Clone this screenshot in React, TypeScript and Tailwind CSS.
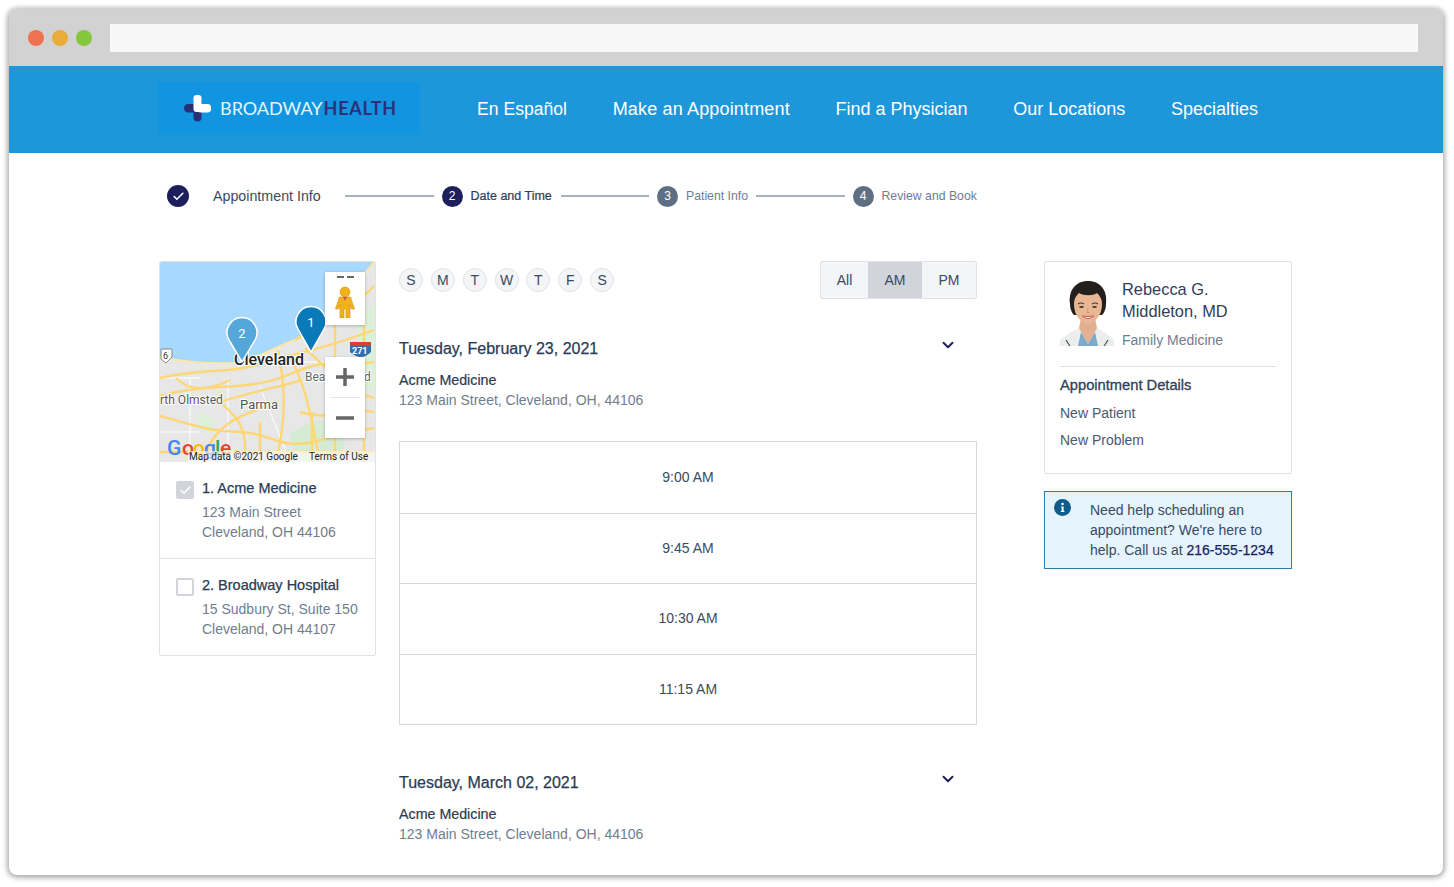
import { Check, ChevronDown } from "lucide-react";

const NAV = [
  { label: "En Español", cls: "text-[17.6px]" },
  { label: "Make an Appointment", cls: "tracking-[0.16px]" },
  { label: "Find a Physician", cls: "" },
  { label: "Our Locations", cls: "" },
  { label: "Specialties", cls: "" },
];
const DAYS = ["S", "M", "T", "W", "T", "F", "S"];
const TIMES = ["9:00 AM", "9:45 AM", "10:30 AM", "11:15 AM"];

function Logo() {
  return (
    <div className="mb-[3px] flex h-[53px] w-[262px] items-center bg-[#1195e0] pl-[26px]">
      <svg width="27" height="27" viewBox="0 0 27 27" className="shrink-0">
        <rect x="0" y="9" width="20" height="8.5" rx="4.2" fill="#2a2e75" />
        <rect x="9.5" y="13" width="8" height="13.5" rx="4" fill="#2a2e75" />
        <rect x="9.5" y="0" width="8" height="17" rx="3" fill="#fff" />
        <rect x="13" y="9" width="14" height="8.5" rx="3.5" fill="#fff" />
      </svg>
      <span className="ml-[9px] text-[18px] leading-none text-[#e6f5fd] [font-family:'Lato',sans-serif]">
        BROADWAY<span className="ml-[1px] font-bold tracking-[0.7px] text-[#2d2f7a]">HEALTH</span>
      </span>
    </div>
  );
}

function StepLine() {
  return <div className="h-[2px] w-[88.5px] bg-[#a9b1bf]" />;
}

function StepDot({ n, active }: { n: number; active?: boolean }) {
  return (
    <span
      className={`flex h-[21px] w-[21px] items-center justify-center rounded-full text-[12px] text-white ${
        active ? "bg-[#1c1f5c]" : "bg-[#5f6f83]"
      }`}
    >
      {n}
    </span>
  );
}

function Stepper() {
  return (
    <div className="flex h-[85px] items-center pl-[158px] pt-[1px]">
      <span className="flex h-[22px] w-[22px] items-center justify-center rounded-full bg-[#1c1f5c]">
        <Check className="h-[13px] w-[13px] text-white" strokeWidth={3} />
      </span>
      <span className="ml-[24px] mr-[24px] mt-[1px] w-[108px] whitespace-nowrap text-[14.25px] text-[#3a4a5f]">Appointment Info</span>
      <StepLine />
      <span className="mx-[8px]"><StepDot n={2} active /></span>
      <span className="mr-[8px] mt-[1px] w-[82px] whitespace-nowrap text-[12.5px] text-[#2c3c55] [-webkit-text-stroke:0.2px_#2c3c55]">Date and Time</span>
      <StepLine />
      <span className="mx-[8px]"><StepDot n={3} /></span>
      <span className="mr-[8px] mt-[1px] w-[62px] whitespace-nowrap text-[12.25px] text-[#6f7d8f]">Patient Info</span>
      <StepLine />
      <span className="mx-[8px]"><StepDot n={4} /></span>
      <span className="mt-[1px] whitespace-nowrap text-[12.25px] text-[#6f7d8f]">Review and Book</span>
    </div>
  );
}

function MapArt() {
  const roads = [
    "M0 116 C40 106 70 112 100 102 S150 92 214 68",
    "M0 134 C50 120 90 130 130 112 S180 106 214 100",
    "M0 154 C30 162 50 170 80 170 S120 190 160 178 S200 170 214 166",
    "M0 190 H214",
    "M118 88 C124 120 128 150 116 200",
    "M128 92 C145 120 150 150 158 190",
    "M84 200 C90 160 70 150 60 140 C90 130 120 125 142 118",
    "M44 200 C50 160 90 150 118 140",
    "M145 86 C170 110 190 130 214 136",
    "M175 60 V200",
    "M204 30 V200",
    "M140 150 C170 160 185 145 214 150",
    "M135 78 C160 65 190 50 214 24",
    "M16 116 C30 130 50 128 70 118",
    "M100 200 V160 M152 200 V150",
  ];
  return (
    <svg width="215" height="200" viewBox="0 0 215 200" className="block">
      <rect width="215" height="200" fill="#e7e7e7" />
      <path d="M0 95 C25 100 55 102 75 101 C100 96 115 85 135 78 C155 66 175 50 214 0 H0 Z" fill="#a8d8fd" />
      <path d="M0 95 C25 100 55 102 75 101 C100 96 115 85 135 78 C155 66 175 50 214 0" fill="none" stroke="#fde6a6" strokeWidth="2" />
      <path d="M130 172 C150 155 172 155 188 168 L180 200 H135 Z" fill="#d5ebd3" />
      <path d="M197 60 L215 40 V130 L202 125 Z" fill="#dcefd8" />
      <path d="M40 150 L56 158 L48 172 L36 164 Z" fill="#dcefd8" />
      <path d="M0 116 H40 M30 116 V200 M68 116 V200 M100 125 L130 200 M0 170 H40 M140 100 H214" fill="none" stroke="#fff" strokeWidth="1" />
      {roads.map((d) => (
        <path key={d} d={d} fill="none" stroke="#fdd775" strokeWidth="2.4" />
      ))}
      <path d="M1 87 H12 L12 95 L6 101 L1 97 Z" fill="#fff" stroke="#888" strokeWidth="1" />
      <text x="3" y="97" fontSize="9" fill="#333" fontFamily="Roboto, sans-serif">6</text>
      <path d="M190 83 H211 V90 Q201 100 190 90 Z" fill="#2f6fb5" />
      <rect x="190" y="80" width="21" height="3.5" fill="#d9412f" />
      <text x="192" y="92" fontSize="9" fontWeight="700" fill="#fff" fontFamily="Roboto, sans-serif">271</text>
      <g fontFamily="Roboto, sans-serif" stroke="#fff" strokeWidth="2" paintOrder="stroke">
        <text x="74" y="103" fontSize="16" fontWeight="500" fill="#222">Cleveland</text>
        <text x="145" y="119" fontSize="12" fill="#666">Bea</text>
        <text x="204" y="119" fontSize="12" fill="#666">d</text>
        <text x="0" y="142" fontSize="12" fill="#555">rth Olmsted</text>
        <text x="80" y="147" fontSize="13" fill="#555">Parma</text>
      </g>
      <g fontFamily="Roboto, sans-serif" fontWeight="500" fontSize="21">
        <text x="7" y="193" fill="#4285f4">G</text>
        <text x="22" y="193" fill="#ea4335">o</text>
        <text x="33" y="193" fill="#fbbc05">o</text>
        <text x="44" y="193" fill="#4285f4">g</text>
        <text x="55" y="193" fill="#34a853">l</text>
        <text x="60" y="193" fill="#ea4335">e</text>
      </g>
      <rect x="28" y="189" width="187" height="11" fill="#fff" fillOpacity="0.6" />
      <g fontFamily="Roboto, sans-serif" fontSize="10" fill="#222">
        <text x="29" y="198">Map data ©2021 Google</text>
        <text x="149" y="198">Terms of Use</text>
      </g>
      {/* pins */}
      <path d="M82 100 L69 78 A15 15 0 1 1 95 78 Z" fill="#53a8d9" stroke="#fff" strokeWidth="1.5" />
      <text x="82" y="76" textAnchor="middle" fontSize="13" fill="#fff" fontFamily="Roboto, sans-serif">2</text>
      <path d="M151 90 L138 67 A15 15 0 1 1 164 67 Z" fill="#0a79b8" stroke="#fff" strokeWidth="1.5" />
      <text x="151" y="65" textAnchor="middle" fontSize="13" fill="#fff" fontFamily="Roboto, sans-serif">1</text>
    </svg>
  );
}

function Pegman() {
  return (
    <svg width="20" height="32" viewBox="0 0 20 32">
      <circle cx="10" cy="6" r="5" fill="#f2b21e" stroke="#d18f10" strokeWidth="0.6" />
      <path d="M4.5 11 H15.5 L19.5 23 H16.5 L15 19 V32 H11 V23 H9 V32 H5 V19 L3.5 23 H0.5 Z" fill="#f2b21e" stroke="#d18f10" strokeWidth="0.6" />
      <path d="M8 11 L10 15 L12 11 Z" fill="#d9534f" />
    </svg>
  );
}

function LocationsCard() {
  return (
    <div className="w-[217px] shrink-0 rounded-[2px] border border-[#dfe2e7] bg-white">
      <div className="relative h-[200px] overflow-hidden rounded-t-[2px]">
        <MapArt />
        <div className="absolute left-[165px] top-[10px] flex h-[53px] w-[40px] flex-col items-center bg-white shadow-[0_1px_3px_rgba(0,0,0,0.25)]">
          <div className="mt-[2px] flex h-[10px] gap-[3px] pt-[1px]">
            <span className="mt-[1px] h-[2px] w-[7px] bg-[#666]" />
            <span className="mt-[1px] h-[2px] w-[7px] bg-[#666]" />
          </div>
          <div className="mt-[2px]"><Pegman /></div>
        </div>
        <div className="absolute left-[165px] top-[95px] flex h-[81px] w-[40px] flex-col items-center bg-white shadow-[0_1px_3px_rgba(0,0,0,0.25)]">
          <svg width="20" height="40" viewBox="0 0 20 40"><path d="M1 20 H19 M10 11 V29" stroke="#666" strokeWidth="3.5" /></svg>
          <div className="h-px w-[30px] bg-[#e6e6e6]" />
          <svg width="20" height="40" viewBox="0 0 20 40"><path d="M1 20 H19" stroke="#666" strokeWidth="3.5" /></svg>
        </div>
      </div>
      <div className="flex h-[97px] border-b border-[#dfe2e7] pl-[16px] pt-[16px]">
        <span className="mr-[8px] mt-[3px] flex h-[18px] w-[18px] items-center justify-center rounded-[2px] bg-[#d1d5db]">
          <Check className="h-[13px] w-[13px] text-white" strokeWidth={3} />
        </span>
        <div>
          <div className="text-[14.5px] leading-[20px] text-[#2a3b55] [-webkit-text-stroke:0.25px_#2a3b55]">1. Acme Medicine</div>
          <div className="mt-[4px] text-[14px] leading-[20px] text-[#6f7d8f]">123 Main Street</div>
          <div className="text-[14px] leading-[20px] text-[#6f7d8f]">Cleveland, OH 44106</div>
        </div>
      </div>
      <div className="flex h-[96px] pl-[16px] pt-[16px]">
        <span className="mr-[8px] mt-[3px] h-[18px] w-[18px] rounded-[2px] border-2 border-[#d1d5db] bg-white" />
        <div>
          <div className="text-[14.5px] leading-[20px] text-[#2a3b55] [-webkit-text-stroke:0.25px_#2a3b55]">2. Broadway Hospital</div>
          <div className="mt-[4px] text-[14px] leading-[20px] text-[#6f7d8f]">15 Sudbury St, Suite 150</div>
          <div className="text-[14px] leading-[20px] text-[#6f7d8f]">Cleveland, OH 44107</div>
        </div>
      </div>
    </div>
  );
}

function DateHead({ date }: { date: string }) {
  return (
    <>
      <div className="flex items-start justify-between pr-[20px]">
        <div className="text-[16px] leading-[22px] text-[#2a3b55] [-webkit-text-stroke:0.25px_#2a3b55]">{date}</div>
        <ChevronDown className="-mt-[2px] h-[18px] w-[18px] text-[#1c1f5c]" strokeWidth={2.6} />
      </div>
      <div className="mt-[10px] text-[14.25px] leading-[20px] text-[#2a3b55] [-webkit-text-stroke:0.2px_#2a3b55]">Acme Medicine</div>
      <div className="text-[14px] leading-[20px] text-[#6f7d8f]">123 Main Street, Cleveland, OH, 44106</div>
    </>
  );
}

function Schedule() {
  return (
    <div className="ml-[23px] w-[578px] shrink-0">
      <div className="flex items-start justify-between">
        <div className="mt-[7px] flex gap-[7.85px]">
          {DAYS.map((d, i) => (
            <span
              key={i}
              className="flex h-[24px] w-[24px] items-center justify-center rounded-full border border-[#dfe2e7] bg-[#f4f5f7] text-[14px] text-[#3a4a5f]"
            >
              {d}
            </span>
          ))}
        </div>
        <div className="flex h-[38px] overflow-hidden rounded-[2px] border border-[#dfe2e7] bg-[#f4f5f7] text-[14px] text-[#3a4a5f]">
          <span className="flex w-[47px] items-center justify-center">All</span>
          <span className="flex w-[54px] items-center justify-center bg-[#d1d5db]">AM</span>
          <span className="flex w-[54px] items-center justify-center">PM</span>
        </div>
      </div>
      <div className="mt-[39px]">
        <DateHead date="Tuesday, February 23, 2021" />
      </div>
      <div className="mt-[31px] border border-[#d5d9df]">
        {TIMES.map((t, i) => (
          <div
            key={t}
            className={`flex h-[70.5px] items-center justify-center text-[14px] text-[#3a4a5f] ${i > 0 ? "border-t border-[#d5d9df]" : ""}`}
          >
            {t}
          </div>
        ))}
      </div>
      <div className="mt-[47px]">
        <DateHead date="Tuesday, March 02, 2021" />
      </div>
    </div>
  );
}

function Portrait() {
  return (
    <svg width="54" height="66" viewBox="0 0 54 66" className="shrink-0">
      <path d="M0 66 V60 C7 54 14 51 20 47 H36 C42 51 48 54 54 60 V66 Z" fill="#eceeee" />
      <path d="M19 48 L28 64 L37 48 L35 38 H21 Z" fill="#e2b08e" />
      <path d="M21 52 L28 64 L35 52 L38 66 H18 Z" fill="#7fa8c9" />
      <path d="M6 60 C8 63 9 65 10 66 M48 60 C46 63 45 65 44 66" stroke="#555" strokeWidth="1.3" fill="none" />
      <path d="M10 24 C8 8 18 1 28 1 C38 1 48 8 46 24 C46 29 44 33 42 35 H14 C12 33 10 29 10 24 Z" fill="#241e1c" />
      <path d="M14 24 C14 18 17 15 19 13 C24 16 33 16 37 13 C40 16 42 19 42 24 C42 36 35 43 28 43 C21 43 14 36 14 24 Z" fill="#e9b794" />
      <path d="M18 24 Q21 22 24 24 M32 24 Q35 22 38 24" stroke="#4a342a" strokeWidth="1.1" fill="none" />
      <path d="M19.5 27 H23.5 M32.5 27 H36.5" stroke="#2d201b" strokeWidth="1.3" />
      <path d="M28 28 L27 32.5 H29.5" stroke="#c98f6d" strokeWidth="0.8" fill="none" />
      <path d="M22 36 Q28 41 34 36 Q28 37 22 36 Z" fill="#fff" stroke="#c7615c" strokeWidth="1" />
    </svg>
  );
}

function Sidebar() {
  return (
    <div className="ml-[67px] w-[248px] shrink-0">
      <div className="h-[213px] rounded-[2px] border border-[#dfe2e7] px-[15px] pt-[18px]">
        <div className="flex h-[87px] border-b border-[#dfe2e7]">
          <Portrait />
          <div className="ml-[8px] -mt-[2px]">
            <div className="text-[16.4px] leading-[22px] text-[#2f4058]">Rebecca G.</div>
            <div className="text-[16.4px] leading-[22px] text-[#2f4058]">Middleton, MD</div>
            <div className="mt-[8px] text-[14px] leading-[20px] text-[#6f7d8f]">Family Medicine</div>
          </div>
        </div>
        <div className="mt-[8px] text-[14.7px] leading-[20px] text-[#2f4058] [-webkit-text-stroke:0.3px_#2f4058]">Appointment Details</div>
        <div className="mt-[7.5px] text-[14px] leading-[20px] text-[#4a5a6e]">New Patient</div>
        <div className="mt-[7.5px] text-[14px] leading-[20px] text-[#4a5a6e]">New Problem</div>
      </div>
      <div className="mt-[17px] flex h-[78px] border border-[#2b7fa8] bg-[#e5f4fc] pl-[9px]">
        <svg width="17" height="17" viewBox="0 0 17 17" className="mt-[7px] shrink-0">
          <circle cx="8.5" cy="8.5" r="8.5" fill="#0f5c8c" />
          <circle cx="8.5" cy="5" r="1.3" fill="#fff" />
          <path d="M7.2 7.5 H9.6 V12 H10.4 V13 H6.8 V12 H7.6 V8.5 H7.2 Z" fill="#fff" />
        </svg>
        <div className="ml-[19px] mt-[8px] text-[14px] leading-[20px] text-[#3a4a5f]">
          Need help scheduling an appointment? We're here to help. Call us at{" "}
          <span className="text-[#1c1f5c] [-webkit-text-stroke:0.25px_#1c1f5c]">216-555-1234</span>
        </div>
      </div>
    </div>
  );
}

export default function App() {
  return (
    <div className="h-[887px] w-[1454px] overflow-hidden bg-white pl-[9px] pt-[9px] [font-family:'Liberation_Sans',Arial,sans-serif]">
      <div className="h-[866px] w-[1434px] overflow-hidden rounded-[8px] bg-white shadow-[0_1px_5px_2px_rgba(0,0,0,0.32)]">
        <div className="flex h-[57px] items-center bg-[#d2d2d2] pl-[19px]">
          <span className="h-[16px] w-[16px] rounded-full bg-[#ee7150]" />
          <span className="ml-[8px] h-[16px] w-[16px] rounded-full bg-[#e8ad38]" />
          <span className="ml-[8px] h-[16px] w-[16px] rounded-full bg-[#84c63c]" />
          <div className="ml-[18px] h-[28px] w-[1308px] bg-[#f7f7f7]" />
        </div>
        <header className="flex h-[87px] items-center bg-[#1d96da] pl-[149px]">
          <Logo />
          <nav className="ml-[57px] flex items-center gap-[45.7px] text-[18px] text-white">
            {NAV.map((n) => (
              <span key={n.label} className={n.cls}>{n.label}</span>
            ))}
          </nav>
        </header>
        <Stepper />
        <div className="mt-[23px] flex items-start pl-[150px]">
          <LocationsCard />
          <Schedule />
          <Sidebar />
        </div>
      </div>
    </div>
  );
}
